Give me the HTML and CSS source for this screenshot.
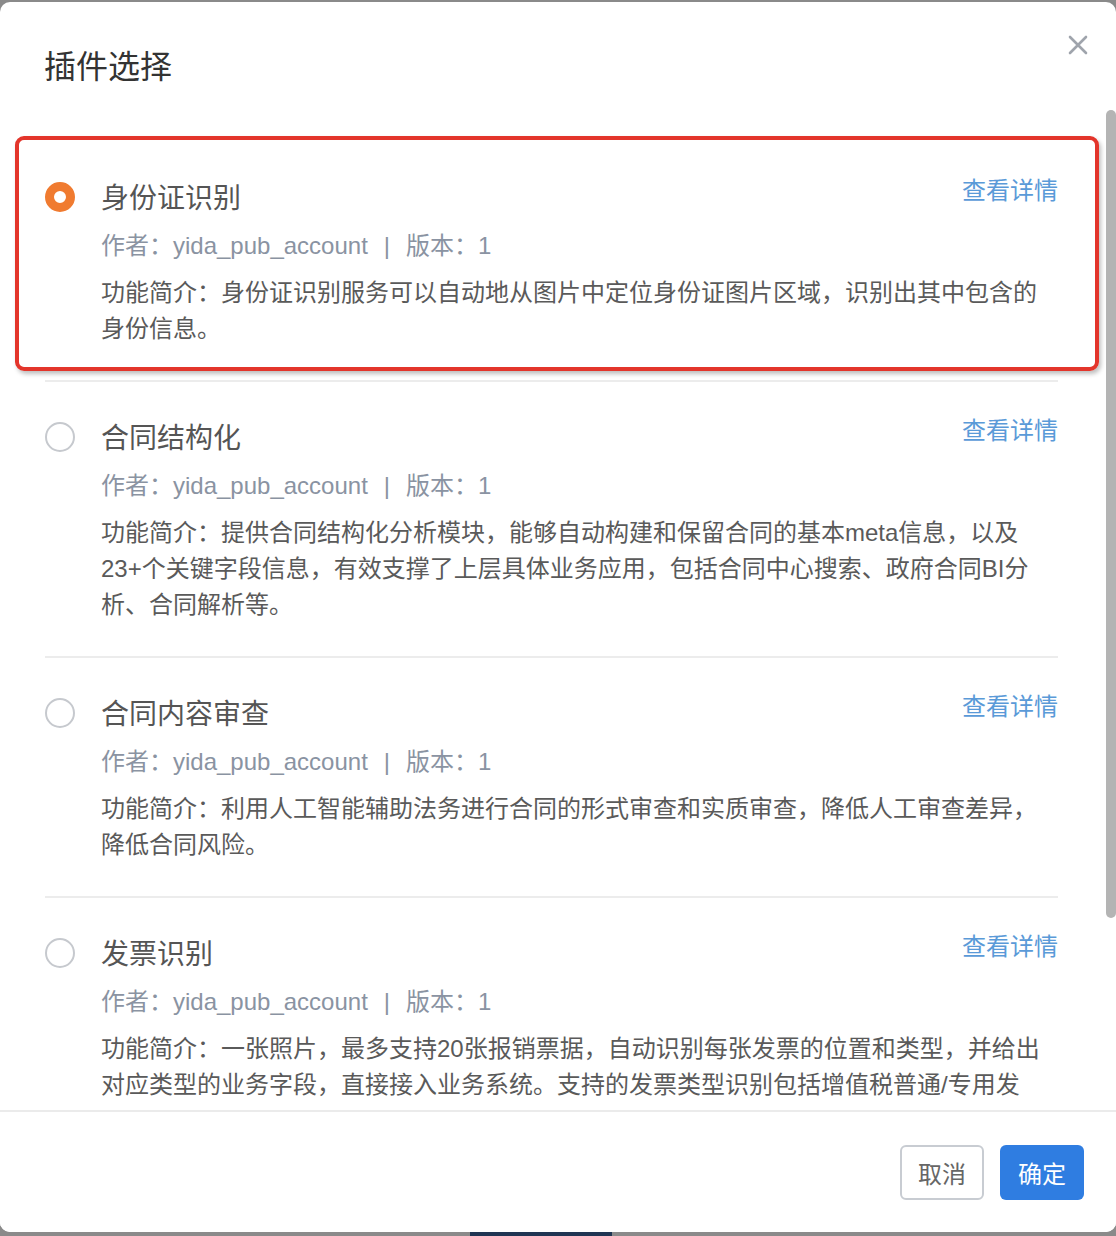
FILE: index.html
```html
<!DOCTYPE html>
<html lang="zh-CN">
<head>
<meta charset="utf-8">
<title>插件选择</title>
<link rel="stylesheet" href="styles.css">
</head>
<body>
<div class="modal">
  <div class="modal-header">
    <h2 class="modal-title">插件选择</h2>
  </div>
  <button class="modal-close" aria-label="关闭">
    <svg width="20" height="20" viewBox="0 0 20 20"><path d="M2 2 L18 18 M18 2 L2 18" stroke="#9fa4ac" stroke-width="2.6" stroke-linecap="round" fill="none"/></svg>
  </button>
  <div class="modal-body">
    <ul class="plugin-list">
      <li class="plugin">
        <span class="radio radio-checked"></span>
        <div class="plugin-main">
          <div class="plugin-head">
            <span class="plugin-name">身份证识别</span>
            <a class="plugin-link">查看详情</a>
          </div>
          <div class="plugin-meta">作者：yida_pub_account<span class="sep">|</span>版本：1</div>
          <p class="plugin-desc">功能简介：身份证识别服务可以自动地从图片中定位身份证图片区域，识别出其中包含的身份信息。</p>
        </div>
        <span class="highlight"></span>
      </li>
      <li class="plugin">
        <span class="radio"></span>
        <div class="plugin-main">
          <div class="plugin-head">
            <span class="plugin-name">合同结构化</span>
            <a class="plugin-link">查看详情</a>
          </div>
          <div class="plugin-meta">作者：yida_pub_account<span class="sep">|</span>版本：1</div>
          <p class="plugin-desc">功能简介：提供合同结构化分析模块，能够自动构建和保留合同的基本meta信息，以及23+个关键字段信息，有效支撑了上层具体业务应用，包括合同中心搜索、政府合同BI分析、合同解析等。</p>
        </div>
      </li>
      <li class="plugin">
        <span class="radio"></span>
        <div class="plugin-main">
          <div class="plugin-head">
            <span class="plugin-name">合同内容审查</span>
            <a class="plugin-link">查看详情</a>
          </div>
          <div class="plugin-meta">作者：yida_pub_account<span class="sep">|</span>版本：1</div>
          <p class="plugin-desc">功能简介：利用人工智能辅助法务进行合同的形式审查和实质审查，降低人工审查差异，降低合同风险。</p>
        </div>
      </li>
      <li class="plugin">
        <span class="radio"></span>
        <div class="plugin-main">
          <div class="plugin-head">
            <span class="plugin-name">发票识别</span>
            <a class="plugin-link">查看详情</a>
          </div>
          <div class="plugin-meta">作者：yida_pub_account<span class="sep">|</span>版本：1</div>
          <p class="plugin-desc">功能简介：一张照片，最多支持20张报销票据，自动识别每张发票的位置和类型，并给出对应类型的业务字段，直接接入业务系统。支持的发票类型识别包括增值税普通/专用发票、卷式发票、机动车销售统一发票等。</p>
        </div>
      </li>
    </ul>
  </div>
  <div class="modal-footer">
    <button class="btn btn-cancel">取消</button>
    <button class="btn btn-primary">确定</button>
  </div>
  <span class="scroll-thumb"></span>
</div>
<div class="backdrop-strip"><span class="backdrop-block"></span></div>
</body>
</html>
```
FILE: styles.css
```css
* { box-sizing: border-box; }
html, body { margin: 0; padding: 0; }
body {
  width: 1116px;
  height: 1236px;
  overflow: hidden;
  background: #8a8a8a;
  font-family: "Liberation Sans", "Noto Sans CJK SC", sans-serif;
  padding-top: 2px;
}
.modal {
  position: relative;
  width: 1116px;
  height: 1230px;
  background: #fff;
  border-radius: 10px;
  display: flex;
  flex-direction: column;
  overflow: hidden;
}
.modal-header {
  height: 108px;
  flex: none;
  padding: 43px 0 0 44px;
}
.modal-title {
  margin: 0;
  font-size: 32px;
  line-height: 44px;
  font-weight: normal;
  color: #333;
}
.modal-close {
  position: absolute;
  top: 33px;
  right: 28px;
  width: 20px;
  height: 20px;
  padding: 0;
  border: 0;
  background: none;
  display: block;
}
.modal-close svg { display: block; }
.modal-body {
  flex: none;
  height: 1000px;
  overflow: hidden;
  padding: 32px 58px 0 45px;
}
.plugin-list {
  list-style: none;
  margin: 0;
  padding: 0;
}
.plugin {
  position: relative;
  display: flex;
  gap: 26px;
  padding: 35px 0 33px;
  border-bottom: 2px solid #ececec;
}
.radio {
  flex: none;
  width: 30px;
  height: 30px;
  margin-top: 5px;
  border-radius: 50%;
  border: 2px solid #c6c9ce;
  background: #fff;
}
.radio-checked {
  border: 9px solid #f07b30;
}
.plugin-main {
  flex: 1;
  min-width: 0;
}
.plugin-head {
  display: flex;
  justify-content: space-between;
  align-items: flex-start;
}
.plugin-name {
  font-size: 28px;
  line-height: 40px;
  padding-top: 2px;
  color: #555;
}
.plugin-link {
  font-size: 24px;
  line-height: 28px;
  color: #5a9ad8;
  text-decoration: none;
}
.plugin-meta {
  margin-top: 9px;
  font-size: 24px;
  line-height: 36px;
  color: #8a93a2;
}
.sep {
  margin: 0 16px;
}
.plugin-desc {
  margin: 11px 0 0;
  font-size: 24px;
  line-height: 36px;
  color: #5a5a5a;
}
.highlight {
  position: absolute;
  left: -30px;
  top: -6px;
  width: 1084px;
  height: 235px;
  border: 4px solid #e3352b;
  border-radius: 9px;
  box-shadow: 2px 3px 4px rgba(0, 0, 0, 0.25);
  pointer-events: none;
}
.modal-footer {
  position: relative;
  z-index: 1;
  flex: none;
  height: 122px;
  background: #fff;
  border-top: 2px solid #ebebeb;
  box-shadow: 0 -6px 0 #fff;
  display: flex;
  align-items: center;
  justify-content: flex-end;
  gap: 16px;
  padding-right: 32px;
}
.btn {
  width: 84px;
  height: 55px;
  border-radius: 6px;
  font-family: inherit;
  font-size: 24px;
  padding: 0;
}
.btn-cancel {
  background: #fff;
  border: 2px solid #c8ccd2;
  color: #666;
}
.btn-primary {
  background: #2f7de1;
  border: 0;
  color: #fff;
}
.scroll-thumb {
  position: absolute;
  z-index: 2;
  top: 108px;
  right: 0;
  width: 10px;
  height: 808px;
  border-radius: 5px;
  background: #b4b4b4;
}
.backdrop-strip {
  height: 4px;
  display: flex;
}
.backdrop-block {
  margin-left: 470px;
  width: 142px;
  height: 4px;
  background: #1f3553;
}
```
